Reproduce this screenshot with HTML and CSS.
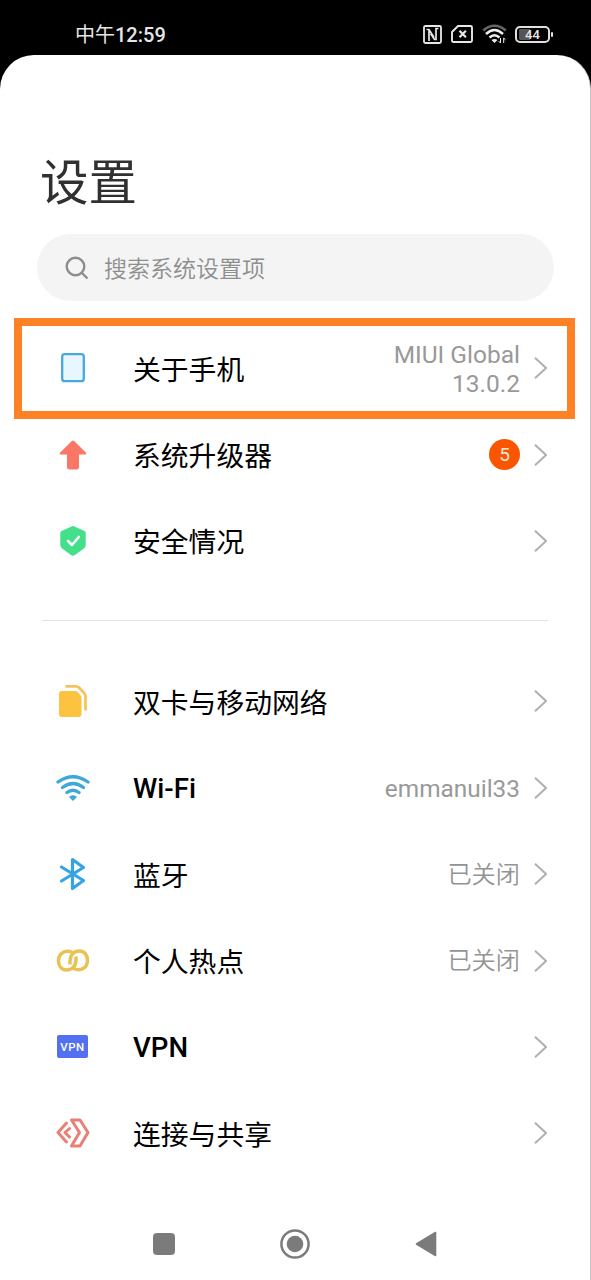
FILE: index.html
```html
<!DOCTYPE html>
<html lang="zh-CN">
<head>
<meta charset="utf-8">
<title>设置</title>
<link rel="stylesheet" href="styles.css">
</head>
<body>
<svg class="defs" width="0" height="0"><defs><symbol id="chevron" viewBox="0 0 13 22"><path d="M1 .8 12 11 1 21.200" fill="none" stroke="#b0b0b0" stroke-width="2"/></symbol></defs></svg>
<header class="status">
  <span class="time">中午<b>12:59</b></span>
  <span class="indicators">
    <svg width="19" height="19" viewBox="0 0 19 19" fill="none" stroke="#e8e8e8"><rect x="1" y="1" width="17" height="17" rx="1.500" stroke-width="1.800"/><path d="M3.500 4.500H6L11 12.500M6 4.500V16M15.500 3.500H13V14.500H11.500L7.500 8.500" stroke-width="1.700"/></svg>
    <svg width="22" height="18" viewBox="0 0 22 18" fill="none" stroke="#e8e8e8" stroke-width="1.900"><path d="M7 1h12.500a1.500 1.500 0 0 1 1.500 1.500v13a1.500 1.500 0 0 1-1.500 1.500h-17A1.500 1.500 0 0 1 1 15.500V7z"/><path d="m8.500 5.800 6.400 6.400m0-6.400-6.400 6.400" stroke-width="2.200"/></svg>
    <svg width="25" height="20" viewBox="0 0 25 20" fill="none" stroke="#eee" stroke-width="2.500"><path d="M1.200 6.500Q12.500-3 23.800 6.500" stroke="#666"/><path d="M4 10q8.500-8 17 0M7.500 13.500q5-4.500 10 0"/><path d="m9.500 16 3 3 3-3q-3-2-6 0z" fill="#eee" stroke="none"/><path d="M18.500 14v5m-1.800-1.800 1.800 1.800M21.700 19v-5m1.800 1.800L21.700 14" stroke-width="1"/></svg>
    <span class="battery"><span class="cell">44</span><i class="tip"></i></span>
  </span>
</header>
<main class="panel">
  <h1 class="title">设置</h1>
  <div class="search">
    <svg width="24" height="24" viewBox="0 0 24 24" fill="none" stroke="#8c8c8c" stroke-width="2.400"><circle cx="10.500" cy="10.500" r="8.800"/><path d="m16.500 16.500 6 6"/></svg>
    <span>搜索系统设置项</span>
  </div>
  <section class="list">
    <div class="row highlighted">
      <span class="icon"><svg width="26" height="32" viewBox="0 0 26 32"><rect x="2.200" y="2.200" width="21.600" height="27" rx="2.500" fill="#e8f6ff" stroke="#46a9dc" stroke-width="2.300"/></svg></span>
      <span class="label">关于手机</span><span class="value">MIUI Global<br>13.0.2</span>
      <svg class="chevron"><use href="#chevron"/></svg>
    </div>
    <div class="row">
      <span class="icon"><svg width="28" height="30" viewBox="0 0 28 30"><path d="M12.800.9q1.200-1 2.400 0L27 12.800q1 1.400-.8 1.700H20V27q0 2.500-2.500 2.500h-7Q8 29.500 8 27V14.500H1.800Q0 14.200 1 12.800z" fill="#fa7767"/></svg></span>
      <span class="label">系统升级器</span><span class="badge">5</span>
      <svg class="chevron"><use href="#chevron"/></svg>
    </div>
    <div class="row">
      <span class="icon"><svg width="26" height="32" viewBox="0 0 26 32"><path d="M11.500 1.500q1.500-.9 3 0l10 4.500q1.200.6 1.200 2v12q0 2-1.500 3.200L15 30q-2 1.400-4 0l-9.200-6.800Q.3 22 .3 20V8q0-1.400 1.200-2z" fill="#43df8a"/><path d="m8 16 4 4 6.800-8" fill="none" stroke="#fff" stroke-width="2.600" stroke-linecap="round" stroke-linejoin="round"/></svg></span>
      <span class="label">安全情况</span>
      <svg class="chevron"><use href="#chevron"/></svg>
    </div>
  </section>
  <hr class="divider">
  <section class="list">
    <div class="row">
      <span class="icon"><svg width="30" height="34" viewBox="0 0 30 34"><path d="M4 7h13q1.500 0 2.500 1l3.200 3.500q.8 1 .8 2V30q0 3-3 3H4q-3 0-3-3V10q0-3 3-3z" fill="#fdc340"/><path d="M8.500 2.300H18q1.800 0 3 1.200l5.500 6q1 1.200 1 2.500v13.500" fill="none" stroke="#f3c45a" stroke-width="2.700" stroke-linecap="round"/></svg></span>
      <span class="label">双卡与移动网络</span>
      <svg class="chevron"><use href="#chevron"/></svg>
    </div>
    <div class="row">
      <span class="icon"><svg width="34" height="28" viewBox="0 0 34 28" fill="none" stroke="#3fa7db" stroke-width="3.300" stroke-linecap="round"><path d="M2 8q15-10.500 30 0M6.500 13.500q10.500-8 21 0M11 18.500q6-4.400 12 0"/><path d="M14 23q3-2 6 0l-3 3z" fill="#3fa7db" stroke-width="1.500" stroke-linejoin="round"/></svg></span>
      <span class="label latin">Wi-Fi</span><span class="value name">emmanuil33</span>
      <svg class="chevron"><use href="#chevron"/></svg>
    </div>
    <div class="row">
      <span class="icon"><svg width="28" height="34" viewBox="0 0 28 34" fill="none" stroke="#35a3e6" stroke-width="3.200" stroke-linecap="round" stroke-linejoin="round"><path d="m2.500 10 22 13.500-11 8V2.500l11 8-22 13.500"/></svg></span>
      <span class="label">蓝牙</span><span class="value cjk">已关闭</span>
      <svg class="chevron"><use href="#chevron"/></svg>
    </div>
    <div class="row">
      <span class="icon"><svg width="34" height="26" viewBox="0 0 34 26" fill="none" stroke="#e9c253" stroke-width="3.500"><path d="M16.500 4.500C8.500.8 2.500 6 2.500 12.800 2.500 18.500 6 22 10.500 22 16.500 22 20 17.500 20 12.500V8.500"/><path d="M17.500 20.500C25.500 24.200 31.500 19 31.500 12.200 31.500 6.500 28 3 23.500 3 17.500 3 14 7.500 14 12.500V16.500"/></svg></span>
      <span class="label">个人热点</span><span class="value cjk">已关闭</span>
      <svg class="chevron"><use href="#chevron"/></svg>
    </div>
    <div class="row">
      <span class="icon"><span class="vpn">VPN</span></span>
      <span class="label latin">VPN</span>
      <svg class="chevron"><use href="#chevron"/></svg>
    </div>
    <div class="row">
      <span class="icon"><svg width="34" height="32" viewBox="0 0 34 32" fill="none" stroke="#e98075" stroke-width="3" stroke-linecap="round" stroke-linejoin="round"><path d="M10.500 6 2 15.500 10.500 25M13.500 11.500 9 15.500l4.500 4.500M15.500 3H24l8 12.500L24 29h-8.500l8-13.500z"/></svg></span>
      <span class="label">连接与共享</span>
      <svg class="chevron"><use href="#chevron"/></svg>
    </div>
  </section>
  <nav class="nav">
    <svg width="22" height="22" viewBox="0 0 22 22"><rect width="22" height="22" rx="4" fill="#7b7b7b"/></svg>
    <svg width="30" height="30" viewBox="0 0 30 30"><circle cx="15" cy="15" r="13.600" fill="none" stroke="#7b7b7b" stroke-width="2.500"/><circle cx="15" cy="15" r="8.300" fill="#7b7b7b"/></svg>
    <svg width="22" height="26" viewBox="0 0 22 26"><path d="M20.500 1.500v23L1.500 13z" fill="#7b7b7b" stroke="#7b7b7b" stroke-width="1.600" stroke-linejoin="round"/></svg>
  </nav>
</main>
</body>
</html>
```
FILE: styles.css
```css
* { box-sizing: border-box; }
body {
  margin: 0;
  height: 1280px;
  overflow: hidden;
  background: #000;
  font-family: Roboto, "Noto Sans CJK SC", sans-serif;
  color: #000;
}
svg { display: block; flex: none; }
.defs { position: absolute; }
.status {
  height: 55px;
  padding: 14px 38px 0 75px;
  display: flex;
  justify-content: space-between;
  align-items: flex-start;
  color: #e6e6e6;
}
.time { padding-top: 1px; font-size: 20px; line-height: 40px; white-space: nowrap; }
.time b { font-weight: 500; }
.indicators { height: 40px; display: flex; align-items: center; gap: 9px; }
.indicators svg:nth-child(3) { margin-right: -1px; }
.battery { display: flex; align-items: center; gap: 1px; }
.cell {
  width: 35px;
  height: 17px;
  border: 2px solid #e0e0e0;
  border-radius: 5px;
  background: linear-gradient(90deg, #555 11px, #000 11px) content-box;
  padding: 1px 2px;
  font-size: 13px;
  font-weight: 500;
  line-height: 12px;
  text-align: center;
}
.tip { width: 2px; height: 5px; border-radius: 1px; background: #e0e0e0; }
.panel {
  height: 1225px;
  padding-top: 93px;
  background: #fff;
  border-radius: 34px 34px 0 0;
  border-right: 1px solid #c4c4c4;
}
.title {
  margin: 0 0 14px 40px;
  font-size: 48.5px;
  line-height: 72px;
  font-weight: 400;
  color: #303030;
}
.search {
  margin: 0 36px 24px 37px;
  height: 67px;
  padding-left: 28px;
  border-radius: 34px;
  background: #f4f4f4;
  display: flex;
  align-items: center;
  gap: 15px;
  font-size: 23px;
  font-weight: 350;
  color: #8e8e8e;
}
.search span { padding-bottom: 2px; }
.row {
  position: relative;
  height: 86.4px;
  padding: 0 43px 0 55px;
  display: flex;
  align-items: center;
}
.highlighted::after {
  content: "";
  position: absolute;
  inset: -7px 15px -7.6px 14px;
  border: 8px solid #ff8126;
}
.icon { width: 35px; margin-right: 43px; display: flex; justify-content: center; }
.label { flex: 1; padding-top: 5px; font-size: 27.8px; line-height: 42px; white-space: nowrap; }
.latin { padding-top: 3px; font-size: 27.6px; font-weight: 500; }
.value {
  padding-top: 1px;
  font-size: 24.5px;
  line-height: 29px;
  color: #999;
  text-align: right;
}
.name { font-size: 24.4px; }
.cjk { padding-top: 2px; font-size: 24.2px; font-weight: 350; color: #949494; }
.chevron { width: 13px; height: 22px; margin-left: 14px; }
.badge {
  width: 31px;
  height: 31px;
  border-radius: 50%;
  background: #fa5502;
  color: #ffe9d5;
  font-size: 19px;
  line-height: 32px;
  text-align: center;
}
.vpn {
  width: 31px;
  height: 23px;
  border-radius: 2px;
  background: #5270ef;
  color: #fff;
  font-size: 11.5px;
  font-weight: 500;
  line-height: 24px;
  letter-spacing: .6px;
  text-align: center;
}
.divider { margin: 36px 42px 37px; height: 1px; border: 0; background: #e2e2e2; }
.nav {
  margin-top: 52px;
  height: 30px;
  padding: 0 153px;
  display: flex;
  align-items: center;
  justify-content: space-between;
}
```
